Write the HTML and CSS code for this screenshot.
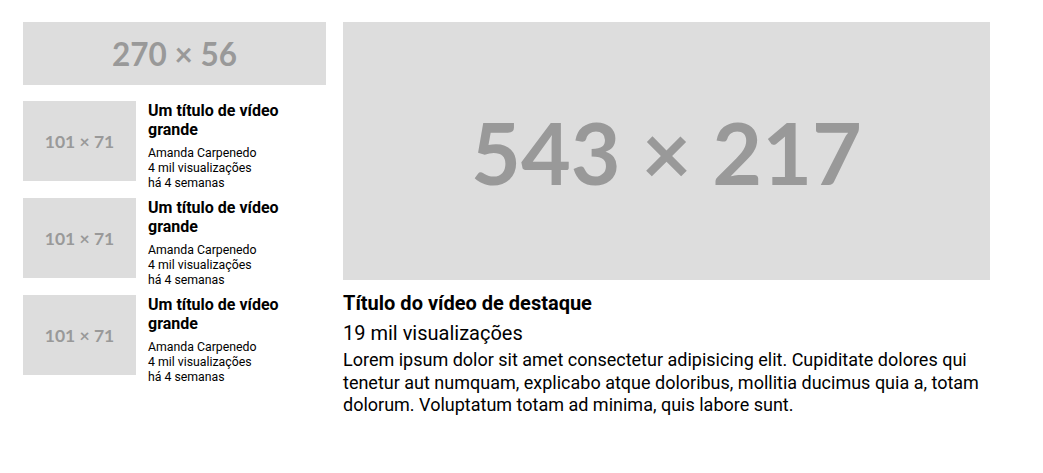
FILE: index.html
```html
<!DOCTYPE html>
<html lang="pt-BR">
<head>
<meta charset="utf-8">
<title>Vídeos</title>
<link rel="stylesheet" href="styles.css">
</head>
<body>
<main class="page">
  <aside class="sidebar">
    <div class="ph ph-banner">270 × 56</div>
    <ul class="video-list">
      <li class="video-item">
        <div class="ph ph-thumb">101 × 71</div>
        <div class="video-info">
          <h3 class="video-title">Um título de vídeo grande</h3>
          <p class="video-meta">Amanda Carpenedo<br>4 mil visualizações<br>há 4 semanas</p>
        </div>
      </li>
      <li class="video-item">
        <div class="ph ph-thumb">101 × 71</div>
        <div class="video-info">
          <h3 class="video-title">Um título de vídeo grande</h3>
          <p class="video-meta">Amanda Carpenedo<br>4 mil visualizações<br>há 4 semanas</p>
        </div>
      </li>
      <li class="video-item">
        <div class="ph ph-thumb">101 × 71</div>
        <div class="video-info">
          <h3 class="video-title">Um título de vídeo grande</h3>
          <p class="video-meta">Amanda Carpenedo<br>4 mil visualizações<br>há 4 semanas</p>
        </div>
      </li>
    </ul>
  </aside>
  <section class="featured">
    <div class="ph ph-main">543 × 217</div>
    <h2 class="featured-title">Título do vídeo de destaque</h2>
    <p class="featured-views">19 mil visualizações</p>
    <p class="featured-desc">Lorem ipsum dolor sit amet consectetur adipisicing elit. Cupiditate dolores qui tenetur aut numquam, explicabo atque doloribus, mollitia ducimus quia a, totam dolorum. Voluptatum totam ad minima, quis labore sunt.</p>
  </section>
</main>
</body>
</html>
```

FILE: styles.css
```css
* { box-sizing: border-box; }
html, body { margin: 0; padding: 0; background: #fff; }
body {
  font-family: Roboto, "Liberation Sans", sans-serif;
  color: #000;
}
.page {
  display: flex;
  align-items: flex-start;
  gap: 17px;
  padding: 22px 0 0 23px;
}
.ph {
  display: flex;
  align-items: center;
  justify-content: center;
  background: #dddddd;
  color: #999999;
  font-family: Lato, "Liberation Sans", sans-serif;
  font-weight: 700;
  white-space: nowrap;
}
.sidebar {
  width: 303px;
  flex: none;
  display: flex;
  flex-direction: column;
  gap: 16px;
}
.ph-banner {
  height: 63px;
  font-size: 31.5px;
}
.video-list {
  list-style: none;
  margin: 0;
  padding: 0;
  display: flex;
  flex-direction: column;
  gap: 7px;
}
.video-item {
  display: flex;
  align-items: flex-start;
  gap: 12px;
}
.ph-thumb {
  width: 113px;
  height: 80px;
  flex: none;
  font-size: 17.5px;
}
.video-info { flex: 1; min-width: 0; }
.video-title {
  margin: 0 0 7px;
  font-size: 16px;
  line-height: 19px;
  font-weight: 700;
}
.video-meta {
  margin: 0;
  font-size: 12.3px;
  line-height: 15px;
}
.featured {
  width: 647px;
  flex: none;
}
.ph-main {
  height: 258px;
  font-size: 86px;
}
.featured-title {
  margin: 11px 0 0;
  font-size: 20px;
  line-height: 24px;
  font-weight: 700;
}
.featured-views {
  margin: 6px 0 0;
  font-size: 20px;
  line-height: 24px;
}
.featured-desc {
  margin: 4px 0 0;
  font-size: 18px;
  line-height: 22.5px;
}
```
